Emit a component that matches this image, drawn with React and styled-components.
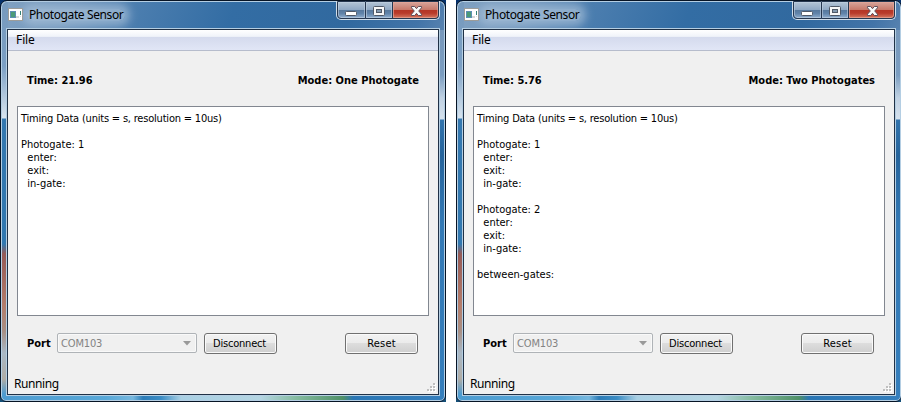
import React from "react";
import styled, { createGlobalStyle } from "styled-components";

const GlobalStyle = createGlobalStyle`
  * { box-sizing: border-box; }
  body { margin: 0; background: #fff; overflow: hidden; }
  button { font: inherit; color: inherit; }
`;

const tahoma = `"DejaVu Sans Condensed", "DejaVu Sans", sans-serif`;
const segoe = `"Noto Sans", "Open Sans", sans-serif`;

const Desktop = styled.main`
  display: flex;
  gap: 10px;
  width: 901px;
  height: 402px;
  overflow: hidden;
  background: #fff;
`;

const Wallpaper = styled.div`
  flex: none;
  width: 446px;
  height: 402px;
  background: linear-gradient(#06316b, #144f78);
`;

const Frame = styled.section`
  display: flex;
  flex-direction: column;
  width: 446px;
  height: 402px;
  padding: 0 6px 6px;
  border: 1px solid #071425;
  border-radius: 7px 7px 6px 6px;
  box-shadow: inset 0 0 0 1px #b4cee3;
  background:
    linear-gradient(90deg, #4d9bd0 0, #58a8d8 105px, #76b7de 132px, #2d7cb7 142px, #3b8cc4 160px, #a9d0e4 180px, #b4d5e2 260px, #85bba0 295px, #4f9068 342px, #2a76b4 352px, #357fbd 100%) 0 100% / 100% 7px no-repeat,
    linear-gradient(#779abd 0, #7b9fc4 65px, #ccdbe9 110px, #d8e4ef 117px, #3478b0 118px, #3178b0 243px, #955a56 253px, #b47d6b 305px, #a88f84 330px, #a9b8c5 352px, #b0aca5 378px, #4d9bd0 393px) 0 0 / 7px 100% no-repeat,
    linear-gradient(#7898bb 0, #7b9dc0 45px, #c0d1e2 68px, #d5e1ed 89px, #3274ad 90px, #25639b 125px, #3379b5 195px, #357fbd 100%) 100% 29px / 7px 100% no-repeat,
    linear-gradient(110deg, #82a2c2 0, #7096bc 12%, #4c7eaf 23%, #336da4 40%, #31699f 60%, #4274a8 72%, #7596ba 84%, #7898bb 100%);
`;

const TitleBar = styled.header`
  display: flex;
  flex: none;
  height: 28px;
  padding: 0 0 0 1px;
`;

const AppIcon = styled.svg`
  flex: none;
  position: relative;
  width: 15px;
  height: 13px;
  margin-top: 7px;
`;

const Title = styled.h1`
  margin: 8px 0 0 4px;
  padding: 0 2px;
  height: 12px;
  font: 12px/12px ${segoe};
  letter-spacing: -0.39px;
  white-space: nowrap;
  color: #000;
  border-radius: 6px;
  background: #a9c2daaa;
  box-shadow: 0 0 8px 5px #a9c2daaa;
`;

const WindowControls = styled.div`
  display: flex;
  flex: none;
  width: 104px;
  height: 19px;
  margin-left: auto;
  margin-right: -1px;
  border: 1px solid #d1deea;
  border-top: 0;
  border-radius: 0 0 5px 5px;
  overflow: hidden;
`;

const ControlButton = styled.button`
  flex: none;
  display: block;
  width: ${({ $width }) => $width}px;
  height: 18px;
  padding: 0;
  border: 1px solid #26374f;
  border-left-width: ${({ $first }) => ($first ? 1 : 0)}px;
  border-radius: ${({ $first, $close }) => ($first ? "0 0 0 4px" : $close ? "0 0 4px 0" : "0")};
  box-shadow: inset 0 0 0 1px ${({ $close }) => ($close ? "#e7a697aa" : "#c1d1e199")};
  background: ${({ $close }) =>
    $close
      ? "linear-gradient(#d7a59b 0, #c77869 49%, #b43525 50%, #b93b2b 70%, #d47860 100%)"
      : "linear-gradient(#b3c4d6 0, #8fa8c3 49%, #56789c 50%, #6184aa 72%, #91afcf 100%)"};

  svg { display: block; }
`;

const Client = styled.div`
  flex: 1;
  display: flex;
  flex-direction: column;
  min-height: 0;
  border: 1px solid #203146;
  outline: 1px solid #b5cee2;
  background: #f0f0f0;
`;

const MenuBar = styled.nav`
  flex: none;
  height: 21px;
  padding-left: 8px;
  font: 12px/19px ${segoe};
  letter-spacing: -0.1px;
  color: #000;
  border-bottom: 1px solid #b6bccc;
  background: linear-gradient(#fff 0, #f1f4fa 6px, #e9edf6 7px, #d4daed 7px, #e1e6f6 100%);
`;

const Readouts = styled.div`
  display: flex;
  justify-content: space-between;
  height: 55px;
  padding: 22px 19px 0;
  font: bold 11px/16px ${tahoma};
  color: #000;
`;

const Readout = styled.span`
  letter-spacing: ${({ $spacing }) => $spacing}px;
  margin-right: ${({ $spacing }) => $spacing}px;
  white-space: nowrap;
`;

const Output = styled.pre`
  flex: none;
  height: 210px;
  margin: 0 9px;
  padding: 5px 3px;
  border: 1px solid #828790;
  background: #fff;
  color: #000;
  font: 11px/13px ${tahoma};
`;

const Line = styled.span`
  display: block;
  min-height: 13px;
  letter-spacing: ${({ $heading }) => ($heading ? -0.2 : 0)}px;
`;

const PortRow = styled.div`
  display: flex;
  height: 22px;
  margin-top: 17px;
  padding: 0 20px 0 19px;
  font: 11px/22px ${tahoma};
`;

const PortLabel = styled.label`
  width: 30px;
  font-weight: bold;
`;

const PortSelect = styled.div`
  display: flex;
  justify-content: space-between;
  width: 140px;
  height: 20px;
  padding: 0 5px 0 3px;
  border: 1px solid #afb3b7;
  border-radius: 2px;
  box-shadow: inset 0 0 0 1px #f9f9f9;
  color: #838383;
  line-height: 19px;
  letter-spacing: -0.15px;

  svg { margin-top: 7px; }
`;

const PushButton = styled.button`
  flex: none;
  width: 73px;
  height: 21px;
  margin-left: ${({ $end }) => ($end ? "auto" : "7px")};
  padding: 0 ${({ $end }) => ($end ? 0 : 2)}px 0 0;
  border: 1px solid #707070;
  border-radius: 3px;
  box-shadow: inset 0 0 0 1px #fafafa;
  background: linear-gradient(#f2f2f2 0, #ebebeb 49%, #dddddd 50%, #cfcfcf 100%);
  color: #000;
  line-height: 19px;
  letter-spacing: ${({ $spacing }) => $spacing}px;
`;

const StatusBar = styled.footer`
  display: flex;
  justify-content: space-between;
  height: 20px;
  margin-top: auto;
  padding: 0 2px 0 6px;
  font: 12px/19px ${segoe};
  letter-spacing: -0.4px;
  color: #000;

  svg { margin-top: 9px; }
`;

const windows = [
  {
    time: "21.96",
    mode: "One Photogate",
    lines: [
      "Timing Data (units = s, resolution = 10us)",
      "",
      "Photogate: 1",
      "  enter:",
      "  exit:",
      "  in-gate:",
    ],
  },
  {
    time: "5.76",
    mode: "Two Photogates",
    lines: [
      "Timing Data (units = s, resolution = 10us)",
      "",
      "Photogate: 1",
      "  enter:",
      "  exit:",
      "  in-gate:",
      "",
      "Photogate: 2",
      "  enter:",
      "  exit:",
      "  in-gate:",
      "",
      "between-gates:",
    ],
  },
];

function ProgramIcon() {
  return (
    <AppIcon viewBox="0 0 15 13" shapeRendering="crispEdges">
      <rect width="15" height="13" fill="#9c9c99" />
      <rect x="1" y="1" width="13" height="11" fill="#fff" />
      <rect x="2" y="3" width="6" height="7" fill="#5d8fb4" />
      <rect x="3" y="4" width="4" height="5" fill="#4a9b78" />
      <rect x="8" y="8" width="3" height="2" fill="#d5d7d7" />
      <rect x="12" y="3" width="1" height="4" fill="#358378" />
      <rect x="12" y="8" width="1" height="1" fill="#ddd" />
    </AppIcon>
  );
}

function MinimizeIcon() {
  return (
    <svg width="26" height="17" viewBox="0 0 26 17">
      <rect x="7.5" y="9.5" width="11" height="4" rx="1" fill="#fff" stroke="#505967" />
    </svg>
  );
}

function MaximizeIcon() {
  return (
    <svg width="26" height="17" viewBox="0 0 26 17">
      <rect x="7.5" y="4.5" width="11" height="9" rx="1" fill="#f7f7f7" stroke="#505967" />
      <rect x="10.5" y="7.5" width="5" height="3" fill="#8399af" stroke="#505967" />
    </svg>
  );
}

function CloseIcon() {
  return (
    <svg width="46" height="17" viewBox="0 0 46 17">
      <path d="M18.5 4.5h3.2l1.8 2.2 1.8-2.2h3.2v1.3L25.7 9l2.8 3.2v1.3h-3.2l-1.8-2.2-1.8 2.2h-3.2v-1.3L21.3 9l-2.8-3.2z" fill="#fafafa" stroke="#604f5a" />
    </svg>
  );
}

function SizeGrip() {
  const dots = [[6, 0], [3, 3], [6, 3], [0, 6], [3, 6], [6, 6]];
  return (
    <svg width="9" height="9" viewBox="0 0 9 9" shapeRendering="crispEdges">
      {dots.map(([x, y]) => (
        <g key={`${x}-${y}`} transform={`translate(${x} ${y})`}>
          <rect x="1" y="1" width="2" height="2" fill="#fff" />
          <rect width="2" height="2" fill="#bfbfbf" />
        </g>
      ))}
    </svg>
  );
}

function SensorWindow({ time, mode, lines }) {
  return (
    <Wallpaper>
      <Frame>
        <TitleBar>
          <ProgramIcon />
          <Title>Photogate Sensor</Title>
          <WindowControls>
            <ControlButton $width={29} $first aria-label="Minimize"><MinimizeIcon /></ControlButton>
            <ControlButton $width={27} aria-label="Maximize"><MaximizeIcon /></ControlButton>
            <ControlButton $width={46} $close aria-label="Close"><CloseIcon /></ControlButton>
          </WindowControls>
        </TitleBar>
        <Client>
          <MenuBar>File</MenuBar>
          <Readouts>
            <Readout $spacing={-0.03}>Time: {time}</Readout>
            <Readout $spacing={0}>Mode: {mode}</Readout>
          </Readouts>
          <Output>
            {lines.map((line, index) => (
              <Line key={index} $heading={index === 0}>{line}</Line>
            ))}
          </Output>
          <PortRow>
            <PortLabel>Port</PortLabel>
            <PortSelect>
              COM103
              <svg width="8" height="5" viewBox="0 0 8 5"><path d="M0 0h8L4 4.5z" fill="#999" /></svg>
            </PortSelect>
            <PushButton $spacing={-0.2}>Disconnect</PushButton>
            <PushButton $end $spacing={0.15}>Reset</PushButton>
          </PortRow>
          <StatusBar>
            Running
            <SizeGrip />
          </StatusBar>
        </Client>
      </Frame>
    </Wallpaper>
  );
}

export default function App() {
  return (
    <>
      <GlobalStyle />
      <Desktop>
        {windows.map((item) => <SensorWindow key={item.mode} {...item} />)}
      </Desktop>
    </>
  );
}
